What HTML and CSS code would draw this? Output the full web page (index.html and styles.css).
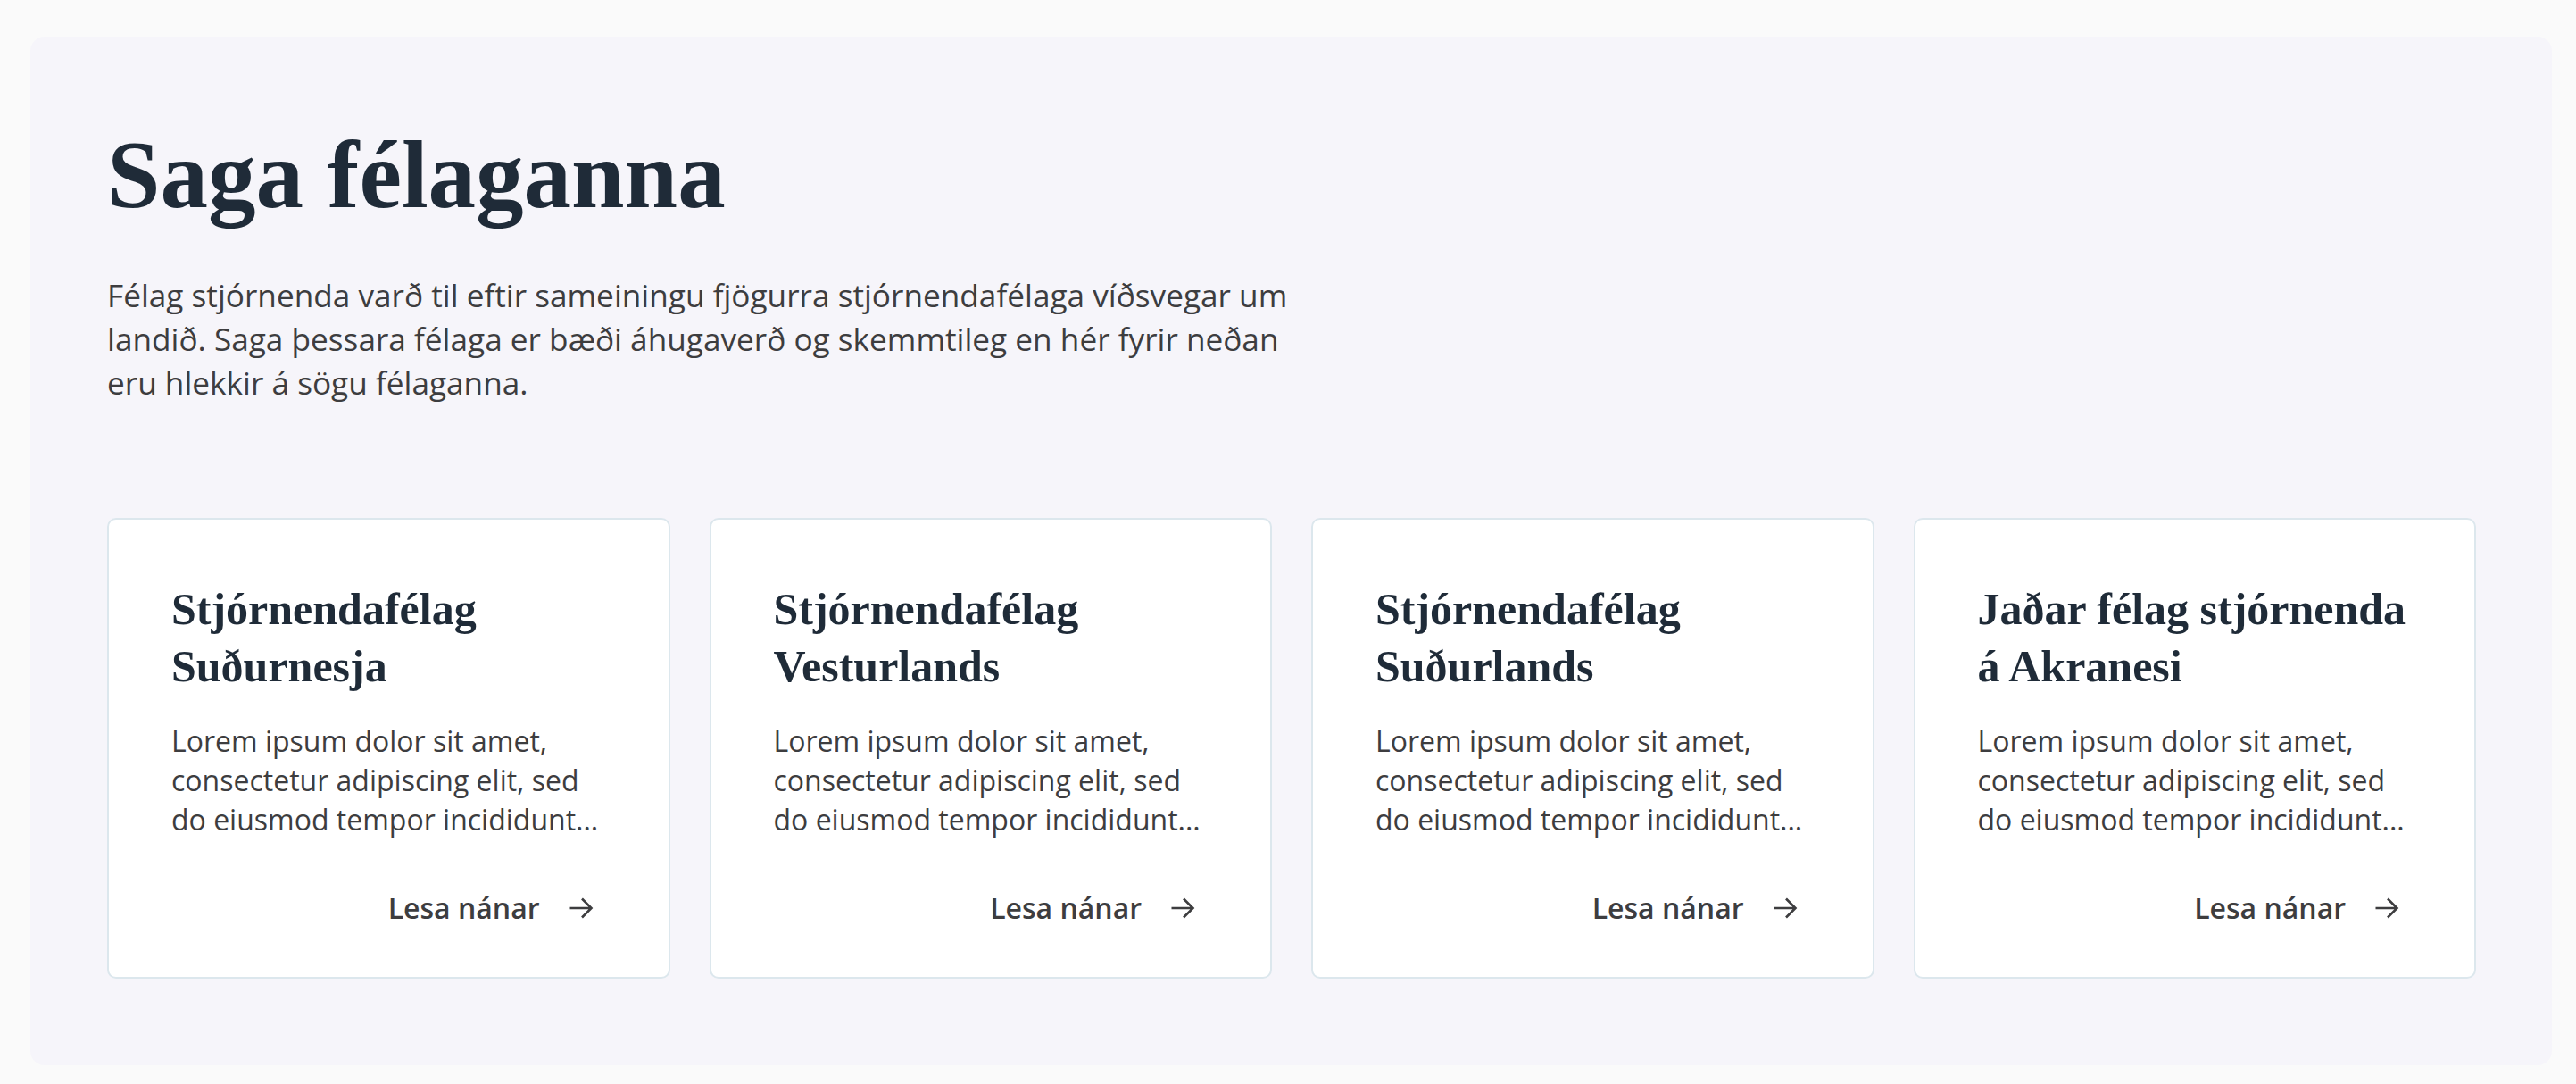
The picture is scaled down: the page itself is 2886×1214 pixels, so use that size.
FILE: index.html
```html
<!DOCTYPE html>
<html lang="is">
<head>
<meta charset="utf-8">
<title>Saga félaganna</title>
<link rel="stylesheet" href="styles.css">
</head>
<body>
<main class="panel">
  <h1 class="title">Saga félaganna</h1>
  <p class="intro">Félag stjórnenda varð til eftir sameiningu fjögurra stjórnendafélaga víðsvegar um landið. Saga þessara félaga er bæði áhugaverð og skemmtileg en hér fyrir neðan eru hlekkir á sögu félaganna.</p>
  <div class="cards">
    <article class="card">
      <h2 class="card-title">Stjórnendafélag<br>Suðurnesja</h2>
      <p class="card-text">Lorem ipsum dolor sit amet, consectetur adipiscing elit, sed do eiusmod tempor incididunt...</p>
      <a class="more" href="#">Lesa nánar <svg class="arrow" viewBox="0 0 28 24" width="28" height="24"><path d="M1.5 12H26M15 1.5L25.5 12L15 22.5" fill="none" stroke="currentColor" stroke-width="2.6"/></svg></a>
    </article>
    <article class="card">
      <h2 class="card-title">Stjórnendafélag<br>Vesturlands</h2>
      <p class="card-text">Lorem ipsum dolor sit amet, consectetur adipiscing elit, sed do eiusmod tempor incididunt...</p>
      <a class="more" href="#">Lesa nánar <svg class="arrow" viewBox="0 0 28 24" width="28" height="24"><path d="M1.5 12H26M15 1.5L25.5 12L15 22.5" fill="none" stroke="currentColor" stroke-width="2.6"/></svg></a>
    </article>
    <article class="card">
      <h2 class="card-title">Stjórnendafélag<br>Suðurlands</h2>
      <p class="card-text">Lorem ipsum dolor sit amet, consectetur adipiscing elit, sed do eiusmod tempor incididunt...</p>
      <a class="more" href="#">Lesa nánar <svg class="arrow" viewBox="0 0 28 24" width="28" height="24"><path d="M1.5 12H26M15 1.5L25.5 12L15 22.5" fill="none" stroke="currentColor" stroke-width="2.6"/></svg></a>
    </article>
    <article class="card">
      <h2 class="card-title">Jaðar félag stjórnenda<br>á Akranesi</h2>
      <p class="card-text">Lorem ipsum dolor sit amet, consectetur adipiscing elit, sed do eiusmod tempor incididunt...</p>
      <a class="more" href="#">Lesa nánar <svg class="arrow" viewBox="0 0 28 24" width="28" height="24"><path d="M1.5 12H26M15 1.5L25.5 12L15 22.5" fill="none" stroke="currentColor" stroke-width="2.6"/></svg></a>
    </article>
  </div>
</main>
</body>
</html>
```

FILE: styles.css
```css
html, body {
  margin: 0;
  padding: 0;
}

body {
  background: #fafafa;
  font-family: "Open Sans", "Liberation Sans", sans-serif;
  color: #3d3d3f;
}

.panel {
  margin: 41px 27px 20px 34px;
  padding: 89px 85px 97px 86px;
  background: #f6f5fa;
  border-radius: 16px;
}

.title {
  margin: 0;
  font-family: "Liberation Serif", "DejaVu Serif", serif;
  font-weight: 700;
  font-size: 107px;
  line-height: 132px;
  color: #1f2b38;
}

.intro {
  margin: 44px 0 0;
  max-width: 1345px;
  font-size: 35.2px;
  line-height: 49px;
  color: #3d3d3f;
}

.cards {
  margin-top: 127px;
  display: grid;
  grid-template-columns: repeat(4, 1fr);
  gap: 44px;
}

.card {
  display: flex;
  flex-direction: column;
  background: #ffffff;
  border: 2px solid #dce7ed;
  border-radius: 10px;
  padding: 68px 71px 55px 70px;
}

.card-title {
  margin: 0;
  font-family: "Liberation Serif", "DejaVu Serif", serif;
  font-weight: 700;
  font-size: 50px;
  line-height: 64px;
  color: #1f2b38;
  white-space: nowrap;
}

.card-text {
  margin: 30px 0 0;
  font-size: 32px;
  line-height: 44px;
  color: #3d3d3f;
}

.more {
  margin-top: 55px;
  align-self: flex-end;
  display: flex;
  align-items: center;
  gap: 32px;
  padding-right: 13px;
  font-size: 32px;
  line-height: 44px;
  font-weight: 600;
  color: #3d3d3f;
  text-decoration: none;
}

.arrow {
  display: block;
  flex: none;
}
```
